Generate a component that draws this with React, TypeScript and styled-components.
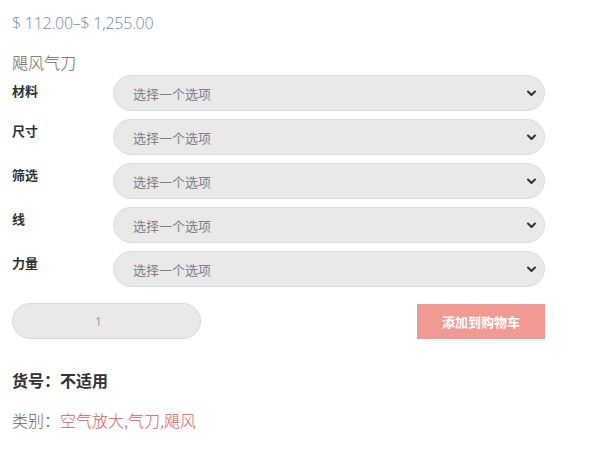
import React from "react";
import styled, { createGlobalStyle } from "styled-components";

const Global = createGlobalStyle`
  html, body { margin: 0; padding: 0; background: #fff; }
  body { font-family: "Open Sans", "Noto Sans CJK SC", sans-serif; }
`;

const Page = styled.div`
  width: 533px;
  padding: 12px 0 0 12px;
`;

const Price = styled.div`
  font-family: "Open Sans", sans-serif;
  font-weight: 300;
  font-size: 16px;
  line-height: 22px;
  color: #7689ad;
  letter-spacing: -0.25px;
`;

const Title = styled.div`
  margin-top: 17px;
  font-family: "Noto Sans CJK SC", sans-serif;
  font-weight: 300;
  font-size: 16px;
  line-height: 22px;
  color: #666;
`;

const Variations = styled.div`
  display: grid;
  grid-template-columns: 101px 432px;
  row-gap: 8px;
  margin-top: 2px;
`;

const Label = styled.div<{ $first?: boolean }>`
  font-family: "Noto Sans CJK SC", sans-serif;
  font-weight: 700;
  font-size: 13px;
  line-height: 18px;
  color: #333;
  padding-top: ${(p) => (p.$first ? 7 : 3)}px;
`;

const SelectBox = styled.div`
  position: relative;
  height: 36px;
  box-sizing: border-box;
  border: 1px solid #dcdcdc;
  border-radius: 18px;
  background: #e9e9e9;
  display: flex;
  align-items: center;
  padding-left: 19px;
  font-family: "Noto Sans CJK SC", sans-serif;
  font-size: 13px;
  color: #808080;
`;

const Chevron = styled.svg`
  position: absolute;
  right: 7px;
  top: 50%;
  margin-top: -3px;
`;

const CartRow = styled.div`
  display: flex;
  justify-content: space-between;
  align-items: center;
  width: 533px;
  margin-top: 16px;
`;

const Qty = styled.div`
  width: 189px;
  height: 36px;
  box-sizing: border-box;
  border: 1px solid #d8d8d8;
  border-radius: 18px;
  background: #e9e9e9;
  display: flex;
  align-items: center;
  justify-content: center;
  padding-right: 16px;
  font-family: "Open Sans", sans-serif;
  font-size: 12px;
  color: #999;
`;

const AddButton = styled.div`
  width: 128px;
  height: 35px;
  background: #f19a94;
  color: #fff;
  display: flex;
  align-items: center;
  justify-content: center;
  font-family: "Noto Sans CJK SC", sans-serif;
  font-weight: 700;
  font-size: 13px;
`;

const Sku = styled.div`
  margin-top: 30px;
  font-family: "Noto Sans CJK SC", sans-serif;
  font-weight: 700;
  font-size: 16px;
  line-height: 22px;
  color: #333;
`;

const Cats = styled.div`
  margin-top: 18px;
  font-family: "Noto Sans CJK SC", sans-serif;
  font-weight: 300;
  font-size: 16px;
  line-height: 22px;
  color: #666;
`;

const CatLink = styled.span`
  color: #e0575f;
`;

const rows = ["材料", "尺寸", "筛选", "线", "力量"];

function Select() {
  return (
    <SelectBox>
      选择一个选项
      <Chevron width="11" height="7" viewBox="0 0 11 7">
        <path d="M2 1.5 L5.5 5 L9 1.5" fill="none" stroke="#333" strokeWidth="2" strokeLinecap="round" strokeLinejoin="round" />
      </Chevron>
    </SelectBox>
  );
}

export default function App() {
  return (
    <>
      <Global />
      <Page>
        <Price>$ 112.00–$ 1,255.00</Price>
        <Title>飓风气刀</Title>
        <Variations>
          {rows.map((r, i) => (
            <React.Fragment key={r}>
              <Label $first={i === 0}>{r}</Label>
              <Select />
            </React.Fragment>
          ))}
        </Variations>
        <CartRow>
          <Qty>1</Qty>
          <AddButton>添加到购物车</AddButton>
        </CartRow>
        <Sku>货号：不适用</Sku>
        <Cats>
          类别：<CatLink>空气放大,气刀,飓风</CatLink>
        </Cats>
      </Page>
    </>
  );
}
